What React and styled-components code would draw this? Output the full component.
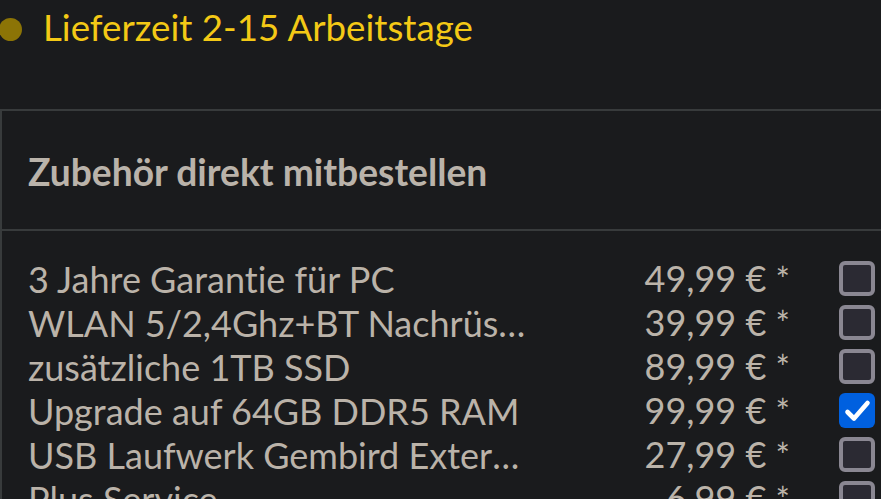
import React from "react";
import styled, { createGlobalStyle } from "styled-components";

const GlobalStyle = createGlobalStyle`
  html, body {
    margin: 0;
    padding: 0;
    background-color: #1a1b1d;
  }
  body {
    font-family: Lato, "Noto Sans", sans-serif;
    font-variant-ligatures: none;
    overflow: hidden;
  }
`;

const items = [
  { name: "3 Jahre Garantie für PC", price: "49,99", checked: false },
  { name: "WLAN 5/2,4Ghz+BT Nachrüstung", price: "39,99", checked: false },
  { name: "zusätzliche 1TB SSD", price: "89,99", checked: false },
  { name: "Upgrade auf 64GB DDR5 RAM", price: "99,99", checked: true },
  { name: "USB Laufwerk Gembird Externes DVD", price: "27,99", checked: false },
  { name: "Plus Service", price: "6,99", checked: false },
];

function App() {
  return (
    <Page>
      <GlobalStyle />
      <Delivery>
        <Dot />
        <DeliveryText>Lieferzeit 2-15 Arbeitstage</DeliveryText>
      </Delivery>
      <Panel>
        <PanelHeader>Zubehör direkt mitbestellen</PanelHeader>
        <List>
          {items.map((item) => (
            <Row key={item.name}>
              <Name>{item.name}</Name>
              <Price>
                {item.price} € <Star>*</Star>
              </Price>
              <Box checked={item.checked}>
                {item.checked && (
                  <svg width="36" height="35" viewBox="0 0 36 35">
                    <path
                      d="M8.5 19l6.5 6.5L28.5 10"
                      fill="none"
                      stroke="#fff"
                      strokeWidth="4.6"
                      strokeLinecap="round"
                      strokeLinejoin="round"
                    />
                  </svg>
                )}
              </Box>
            </Row>
          ))}
        </List>
      </Panel>
    </Page>
  );
}
export default App;

const Page = styled.div`
  width: 881px;
  height: 499px;
  padding-top: 5px;
  box-sizing: border-box;
  overflow: hidden;
  color: #bbb3a9;
`;

const Delivery = styled.div`
  display: flex;
  align-items: center;
  gap: 21px;
`;

const Dot = styled.span`
  width: 23px;
  height: 23px;
  border-radius: 50%;
  background-color: #8c7406;
  margin-left: -1px;
  margin-top: 4px;
`;

const DeliveryText = styled.div`
  font-size: 36.7px;
  color: #f4c916;
`;

const Panel = styled.div`
  margin-top: 60px;
  border-top: 2px solid #383b3c;
  border-left: 2px solid #383b3c;
`;

const PanelHeader = styled.div`
  padding: 38px 26px 35px;
  font-size: 37.2px;
  font-weight: 700;
  color: #bab3aa;
  border-bottom: 2px solid #383b3c;
`;

const List = styled.div`
  padding: 25px 0 0 26px;
`;

const Row = styled.div`
  display: grid;
  grid-template-columns: 502px 260px auto;
  align-items: center;
  height: 44px;
  font-size: 36px;
  line-height: 44px;
`;

const Name = styled.div`
  white-space: nowrap;
  overflow: hidden;
  text-overflow: ellipsis;
`;

const Price = styled.div`
  text-align: right;
  white-space: nowrap;
`;

const Star = styled.span`
  font-size: 34px;
`;

const Box = styled.div`
  width: 36px;
  height: 35px;
  margin-left: 49px;
  box-sizing: border-box;
  border-radius: 6px;
  border: ${(p) => (p.checked ? "none" : "4px solid #8a8792")};
  background-color: ${(p) => (p.checked ? "#0060df" : "#2b2a33")};
  display: flex;
  align-items: center;
  justify-content: center;
`;
